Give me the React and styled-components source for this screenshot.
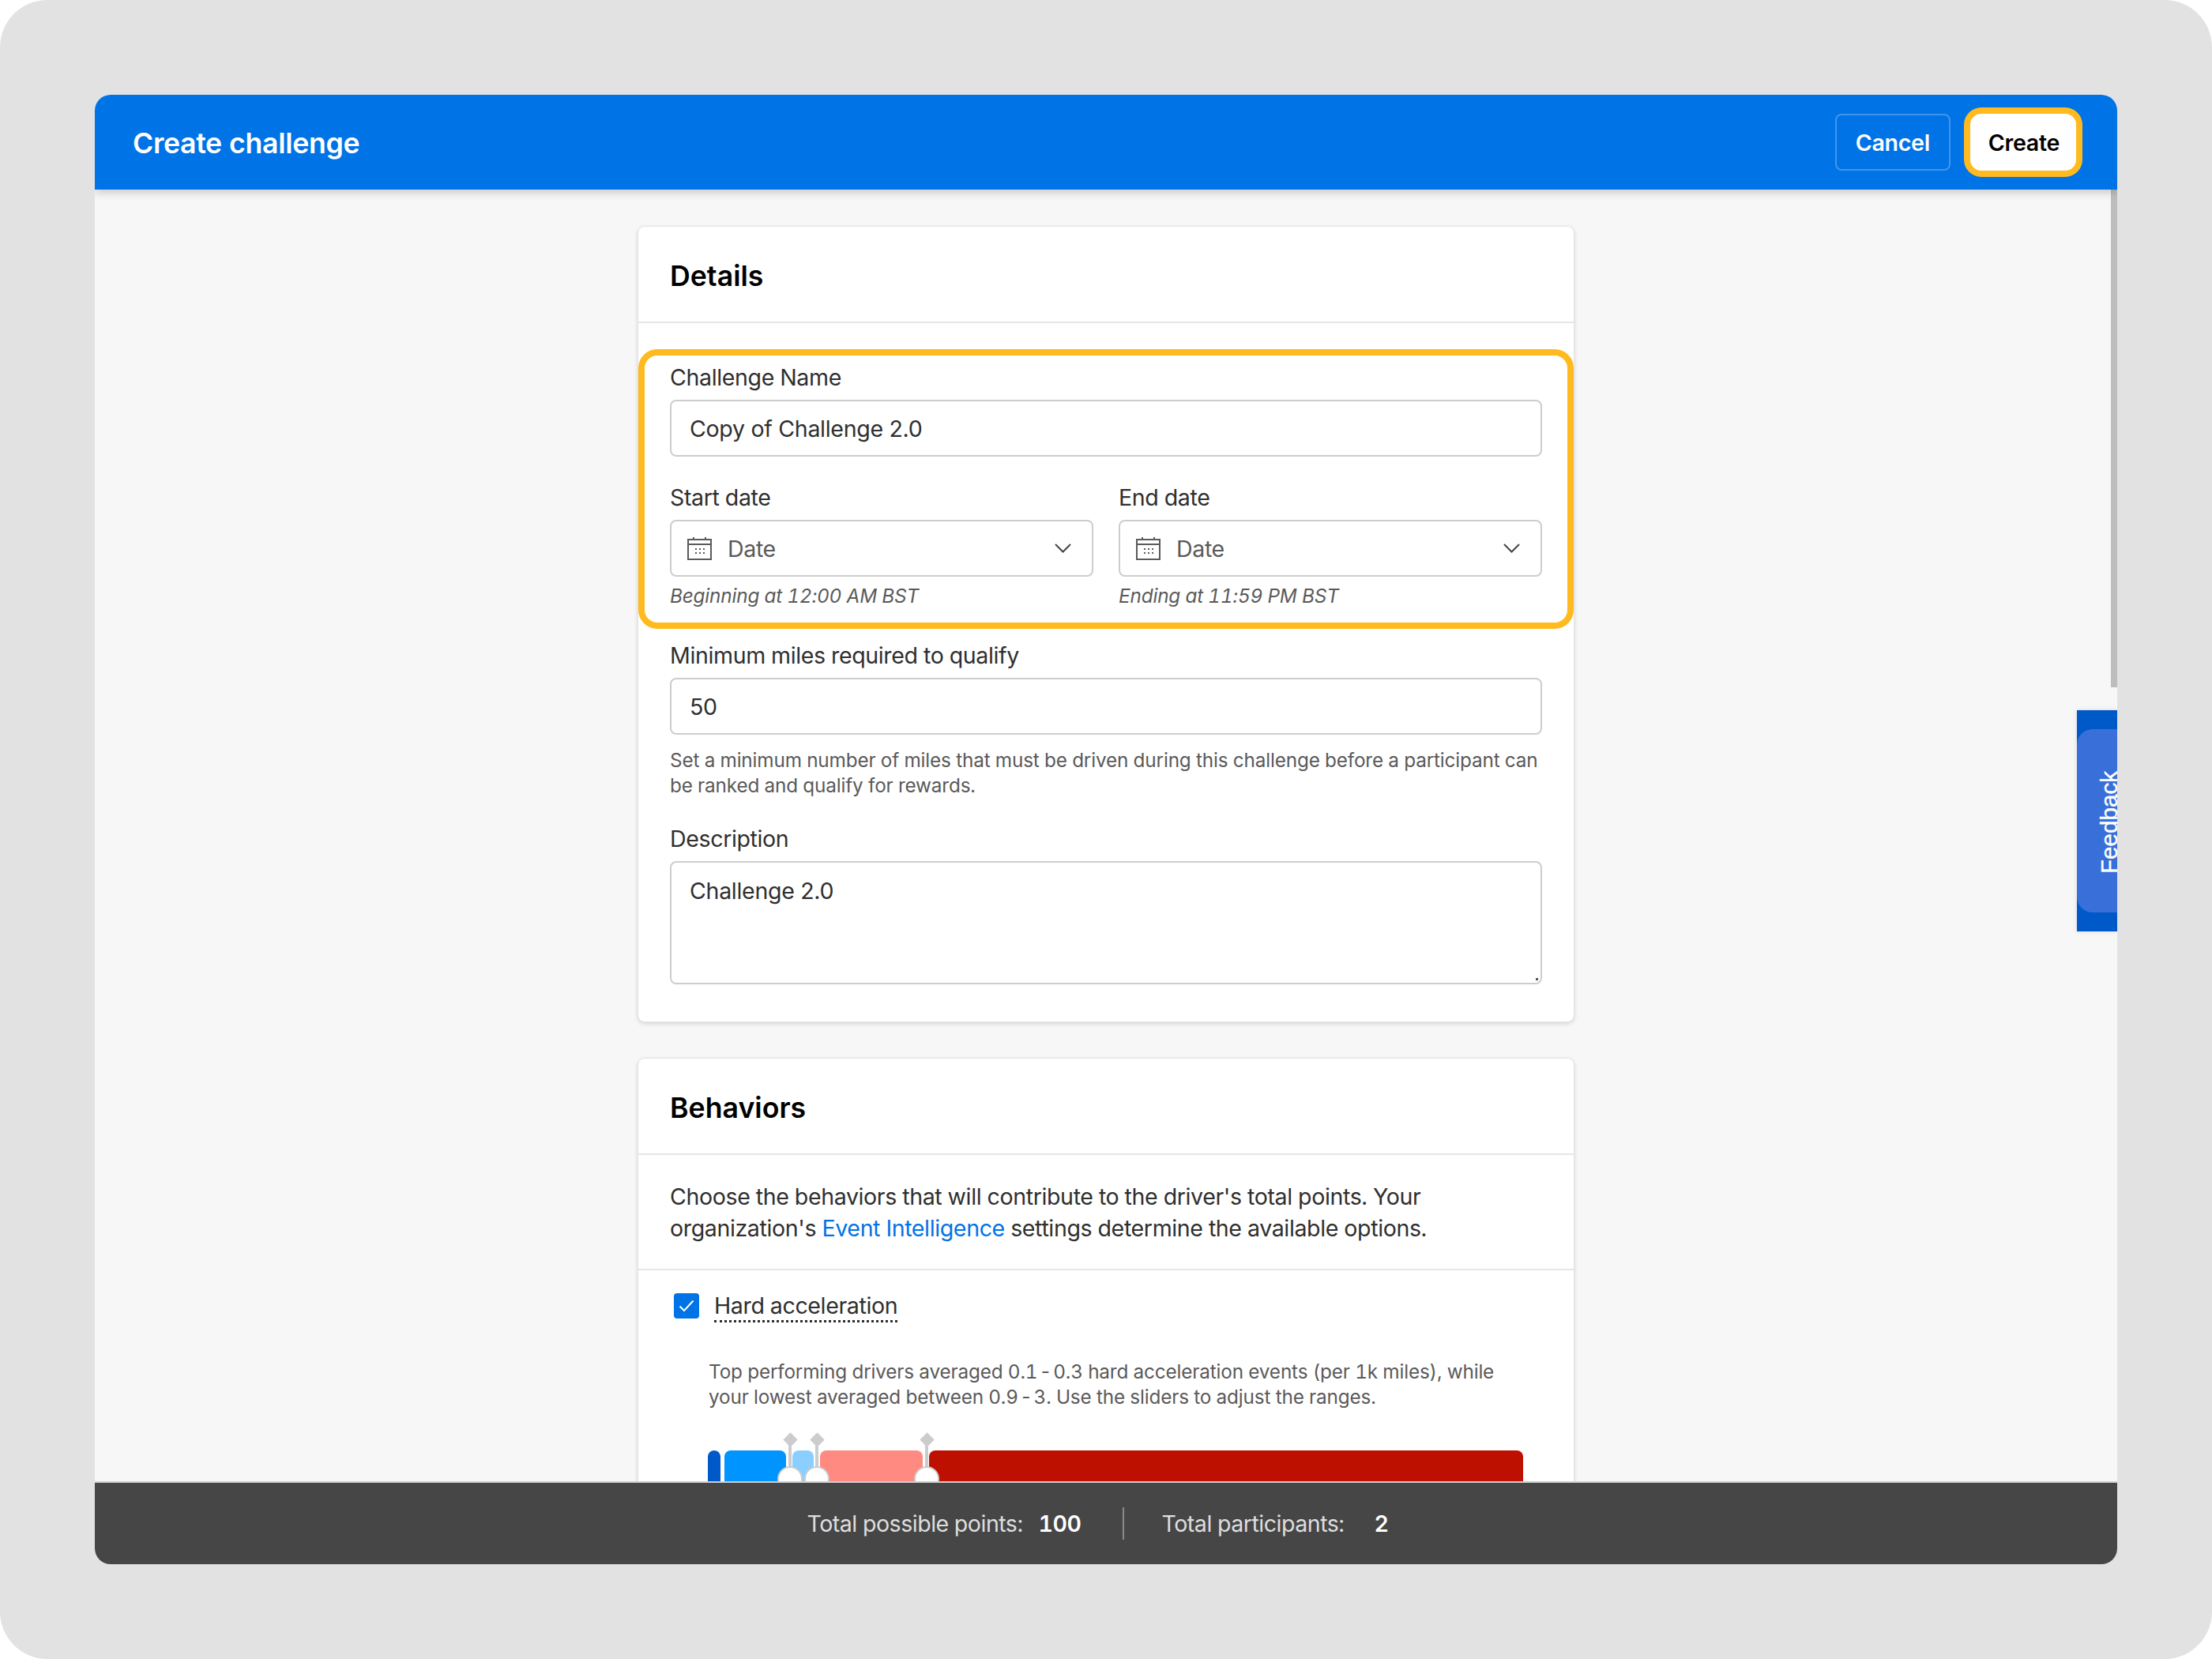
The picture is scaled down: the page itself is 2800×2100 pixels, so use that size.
import React from "react";
import styled, { createGlobalStyle } from "styled-components";

const GlobalStyle = createGlobalStyle`
  html, body { margin: 0; padding: 0; background: #fff; }
  * { box-sizing: border-box; }
  body {
    font-family: "Inter", "Noto Sans", sans-serif;
    font-variant-numeric: tabular-nums;
    letter-spacing: -0.38px;
  }
  input, textarea, button {
    font-variant-numeric: inherit;
    letter-spacing: -0.31px;
  }
`;

const Frame = styled.div`
  width: 2800px;
  height: 2100px;
  padding: 120px;
  background: #e2e2e2;
  border-radius: 60px;
`;

const AppWindow = styled.div`
  height: 100%;
  display: flex;
  flex-direction: column;
  border-radius: 20px;
  overflow: hidden;
  background: #f7f7f7;
`;

const Header = styled.header`
  flex: 0 0 120px;
  display: flex;
  align-items: center;
  justify-content: space-between;
  padding: 0 52px 0 48px;
  background: #0073e6;
  box-shadow: 0 4px 10px rgba(0, 0, 0, 0.18);
  position: relative;
  z-index: 2;
`;

const PageTitle = styled.h1`
  margin: 2px 0 0;
  font-size: 35.7px;
  font-weight: 600;
  letter-spacing: -0.35px;
  color: #fff;
`;

const Actions = styled.div`
  display: flex;
  gap: 25px;
`;

const Button = styled.button`
  height: 72px;
  padding: ${(p) => (p.$primary ? "0 21px 0 23px" : "0 24px")};
  border-radius: ${(p) => (p.$primary ? "14px" : "8px")};
  border: ${(p) => (p.$primary ? "none" : "2px solid rgba(255, 255, 255, 0.25)")};
  background: ${(p) => (p.$primary ? "#fff" : "transparent")};
  color: ${(p) => (p.$primary ? "#000" : "#fff")};
  font: 600 28.57px "Inter", sans-serif;
  box-shadow: ${(p) => (p.$primary ? "0 0 0 8px #ffba1f" : "none")};
`;

const Body = styled.main`
  flex: 1;
  min-height: 0;
  position: relative;
  overflow: hidden;
  display: flex;
  flex-direction: column;
  align-items: center;
  gap: 47px;
  padding-top: 47px;
`;

const ScrollThumb = styled.div`
  position: absolute;
  top: 0;
  right: 0;
  width: 8px;
  height: 630px;
  background: #bdbdbd;
`;

const FeedbackTab = styled.div`
  position: absolute;
  top: 659px;
  right: 0;
  width: 51px;
  height: 280px;
  display: flex;
  align-items: center;
  background: #0059c8;
  box-shadow: 0 0 6px rgba(0, 0, 0, 0.12);
`;

const FeedbackInner = styled.div`
  width: 100%;
  height: 232px;
  display: flex;
  align-items: center;
  justify-content: flex-start;
  padding: 3px 0 0 24px;
  background: #396fd8;
  border-radius: 20px 0 0 20px;
`;

const FeedbackLabel = styled.span`
  writing-mode: vertical-rl;
  transform: rotate(180deg);
  font: 400 29.6px "Liberation Sans", Arial, sans-serif;
  letter-spacing: 0;
  -webkit-text-stroke: 0.4px #fff;
  color: #fff;
  white-space: nowrap;
`;

const Card = styled.section`
  flex: none;
  width: 1184px;
  background: #fff;
  border-radius: 8px;
  box-shadow: 0 0 0 1px #e4e4e4, 0 2px 6px rgba(0, 0, 0, 0.18);
`;

const CardHeader = styled.div`
  height: 122px;
  padding: 4px 40px 0;
  display: flex;
  align-items: center;
  border-bottom: 2px solid #e6e6e6;
`;

const CardTitle = styled.h2`
  margin: 0;
  font-size: 35.7px;
  font-weight: 600;
  letter-spacing: 0;
  color: #000;
`;

const DetailsBody = styled.div`
  padding: 33px 0 47px;
`;

const Highlight = styled.div`
  margin-bottom: 14px;
  padding: 8px 32px 16px;
  border: 8px solid #ffba1f;
  border-radius: 24px;
`;

const Fields = styled.div`
  padding: 0 40px;
`;

const Field = styled.div`
  margin-top: ${(p) => p.$top || 0}px;
`;

const Label = styled.label`
  display: block;
  margin-bottom: 8px;
  font-size: 28.57px;
  line-height: 40px;
  color: #2f2f2f;
`;

const TextInput = styled.input`
  display: block;
  width: 100%;
  height: 72px;
  padding: 0 23px;
  border: 2px solid #cdcdcd;
  border-radius: 8px;
  background: #fff;
  font: 400 28.57px "Inter", sans-serif;
  color: #2f2f2f;
  outline: none;
`;

const AreaWrap = styled.div`
  position: relative;
  height: 156px;
  &::after {
    content: "";
    position: absolute;
    right: 5px;
    bottom: 5px;
    width: 3px;
    height: 3px;
    background: #555;
  }
`;

const TextArea = styled.textarea`
  display: block;
  width: 100%;
  height: 100%;
  padding: 16px 23px;
  border: 2px solid #cdcdcd;
  border-radius: 8px;
  resize: none;
  font: 400 28.57px/40px "Inter", sans-serif;
  color: #2f2f2f;
  outline: none;
`;

const DateGrid = styled.div`
  display: grid;
  grid-template-columns: 1fr 1fr;
  gap: 32px;
  margin-top: 32px;
`;

const DateSelect = styled.div`
  height: 72px;
  padding: 0 26px 0 20px;
  display: flex;
  align-items: center;
  gap: 20px;
  border: 2px solid #cdcdcd;
  border-radius: 8px;
`;

const DateValue = styled.span`
  flex: 1;
  font-size: 28.57px;
  color: #5a5a5a;
`;

const HintItalic = styled.div`
  margin-top: 6px;
  font-size: 24.3px;
  line-height: 36px;
  letter-spacing: -0.16px;
  font-style: italic;
  color: #5a5a5a;
`;

const Hint = styled.p`
  margin: 16px 0 0;
  font-size: 24.3px;
  line-height: 32px;
  letter-spacing: -0.15px;
  color: #5a5a5a;
`;

const Intro = styled.p`
  margin: 0;
  padding: 33px 40px 31px;
  border-bottom: 2px solid #e6e6e6;
  font-size: 28.57px;
  line-height: 40px;
  color: #2f2f2f;
`;

const Link = styled.a`
  color: #0073e6;
  text-decoration: none;
`;

const BehaviorBlock = styled.div`
  padding: 29px 40px 0 45px;
`;

const CheckRow = styled.div`
  display: flex;
  align-items: center;
  gap: 19px;
  height: 32px;
`;

const CheckBox = styled.span`
  flex: none;
  width: 32px;
  height: 32px;
  display: flex;
  align-items: center;
  justify-content: center;
  border-radius: 4px;
  background: #0073e6;
`;

const BehaviorName = styled.span`
  font-size: 28.57px;
  line-height: 36px;
  color: #2f2f2f;
  border-bottom: 3px dotted #2f2f2f;
  margin-top: 2px;
`;

const BehaviorHint = styled(Hint)`
  margin: 51px 24px 0 44px;
`;

const Range = styled.div`
  position: relative;
  display: flex;
  height: 70px;
  margin: 52px 0 0 43px;
`;

const Segment = styled.div`
  flex: none;
  width: ${(p) => p.$width}px;
  margin-left: ${(p) => p.$gap}px;
  background: ${(p) => p.$color};
  border-radius: 8px 8px 0 0;
`;

const Handle = styled.div`
  position: absolute;
  top: -23px;
  left: ${(p) => p.$left}px;
  width: 32px;
  height: 80px;
  margin-left: -16px;
`;

const Diamond = styled.div`
  position: absolute;
  top: 3px;
  left: 9.5px;
  width: 13px;
  height: 13px;
  background: #cccccc;
  transform: rotate(45deg);
`;

const Stem = styled.div`
  position: absolute;
  top: 8px;
  left: 14px;
  width: 4px;
  height: 37px;
  background: #cccccc;
`;

const Knob = styled.div`
  position: absolute;
  top: 43px;
  left: 0;
  width: 32px;
  height: 32px;
  border: 2px solid #cccccc;
  border-radius: 50%;
  background: #fff;
`;

const Footer = styled.footer`
  flex: 0 0 105px;
  display: flex;
  align-items: center;
  justify-content: center;
  padding-right: 21px;
  border-top: 2px solid #cfcfcf;
  background: #464646;
  position: relative;
  z-index: 2;
  font-size: 28.57px;
  letter-spacing: -0.5px;
`;

const Stat = styled.span`
  color: #dedede;
`;

const StatValue = styled.strong`
  margin-left: ${(p) => p.$gap}px;
  font-weight: 600;
  color: #fff;
`;

const FooterDivider = styled.span`
  width: 2px;
  height: 41px;
  margin: 0 48px 0 52px;
  background: #8a8a8a;
`;

const CalendarIcon = () => (
  <svg width="31" height="29" viewBox="0 0 31 29" fill="none">
    <rect x="1" y="3" width="29" height="25" stroke="#5a5a5a" strokeWidth="2" />
    <path d="M1 9h29" stroke="#5a5a5a" strokeWidth="2" />
    <path d="M8 0v4M23 0v4" stroke="#5a5a5a" strokeWidth="2" />
    <path
      d="M10 14h2v2h-2zM15 14h2v2h-2zM20 14h2v2h-2zM10 19h2v2h-2zM15 19h2v2h-2zM20 19h2v2h-2z"
      fill="#5a5a5a"
    />
  </svg>
);

const ChevronIcon = () => (
  <svg width="21" height="12" viewBox="0 0 21 12" fill="none">
    <path d="M1 1l9.5 9.5L20 1" stroke="#444" strokeWidth="2" />
  </svg>
);

const CheckIcon = () => (
  <svg width="20" height="16" viewBox="0 0 20 16" fill="none">
    <path d="M1.5 8.5l5.5 5.5L18.5 1.5" stroke="#fff" strokeWidth="2" />
  </svg>
);

const DATES = [
  { label: "Start date", hint: "Beginning at 12:00 AM BST" },
  { label: "End date", hint: "Ending at 11:59 PM BST" },
];

const SEGMENTS = [
  { width: 16, gap: 0, color: "#0059c8" },
  { width: 78, gap: 5, color: "#0094ff" },
  { width: 27, gap: 8, color: "#8acfff" },
  { width: 130, gap: 8, color: "#ff8a82" },
  { width: 752, gap: 8, color: "#bd1000" },
];

const HANDLES = [104, 138, 277];

const App = () => {
  return (
    <Frame>
      <GlobalStyle />
      <AppWindow>
        <Header>
          <PageTitle>Create challenge</PageTitle>
          <Actions>
            <Button>Cancel</Button>
            <Button $primary>Create</Button>
          </Actions>
        </Header>
        <Body>
          <Card>
            <CardHeader>
              <CardTitle>Details</CardTitle>
            </CardHeader>
            <DetailsBody>
              <Highlight>
                <Label>Challenge Name</Label>
                <TextInput defaultValue="Copy of Challenge 2.0" />
                <DateGrid>
                  {DATES.map((d) => (
                    <div key={d.label}>
                      <Label>{d.label}</Label>
                      <DateSelect>
                        <CalendarIcon />
                        <DateValue>Date</DateValue>
                        <ChevronIcon />
                      </DateSelect>
                      <HintItalic>{d.hint}</HintItalic>
                    </div>
                  ))}
                </DateGrid>
              </Highlight>
              <Fields>
                <Field>
                  <Label>Minimum miles required to qualify</Label>
                  <TextInput defaultValue="50" />
                  <Hint>
                    Set a minimum number of miles that must be driven during this challenge before a
                    participant can be ranked and qualify for rewards.
                  </Hint>
                </Field>
                <Field $top={32}>
                  <Label>Description</Label>
                  <AreaWrap>
                    <TextArea defaultValue="Challenge 2.0" />
                  </AreaWrap>
                </Field>
              </Fields>
            </DetailsBody>
          </Card>
          <Card>
            <CardHeader>
              <CardTitle>Behaviors</CardTitle>
            </CardHeader>
            <Intro>
              Choose the behaviors that will contribute to the driver's total points. Your
              organization's <Link>Event Intelligence</Link> settings determine the available
              options.
            </Intro>
            <BehaviorBlock>
              <CheckRow>
                <CheckBox>
                  <CheckIcon />
                </CheckBox>
                <BehaviorName>Hard acceleration</BehaviorName>
              </CheckRow>
              <BehaviorHint>
                Top performing drivers averaged 0.1{"\u200a-\u200a"}0.3 hard acceleration events (per
                1k miles), while your lowest averaged between 0.9{"\u200a-\u200a"}3. Use the sliders
                to adjust the ranges.
              </BehaviorHint>
              <Range>
                {SEGMENTS.map((s) => (
                  <Segment key={s.color} $width={s.width} $gap={s.gap} $color={s.color} />
                ))}
                {HANDLES.map((left) => (
                  <Handle key={left} $left={left}>
                    <Diamond />
                    <Stem />
                    <Knob />
                  </Handle>
                ))}
              </Range>
            </BehaviorBlock>
          </Card>
          <ScrollThumb />
          <FeedbackTab>
            <FeedbackInner>
              <FeedbackLabel>Feedback</FeedbackLabel>
            </FeedbackInner>
          </FeedbackTab>
        </Body>
        <Footer>
          <Stat>Total possible points:</Stat>
          <StatValue $gap={20}>100</StatValue>
          <FooterDivider />
          <Stat>Total participants:</Stat>
          <StatValue $gap={38}>2</StatValue>
        </Footer>
      </AppWindow>
    </Frame>
  );
};

export default App;
